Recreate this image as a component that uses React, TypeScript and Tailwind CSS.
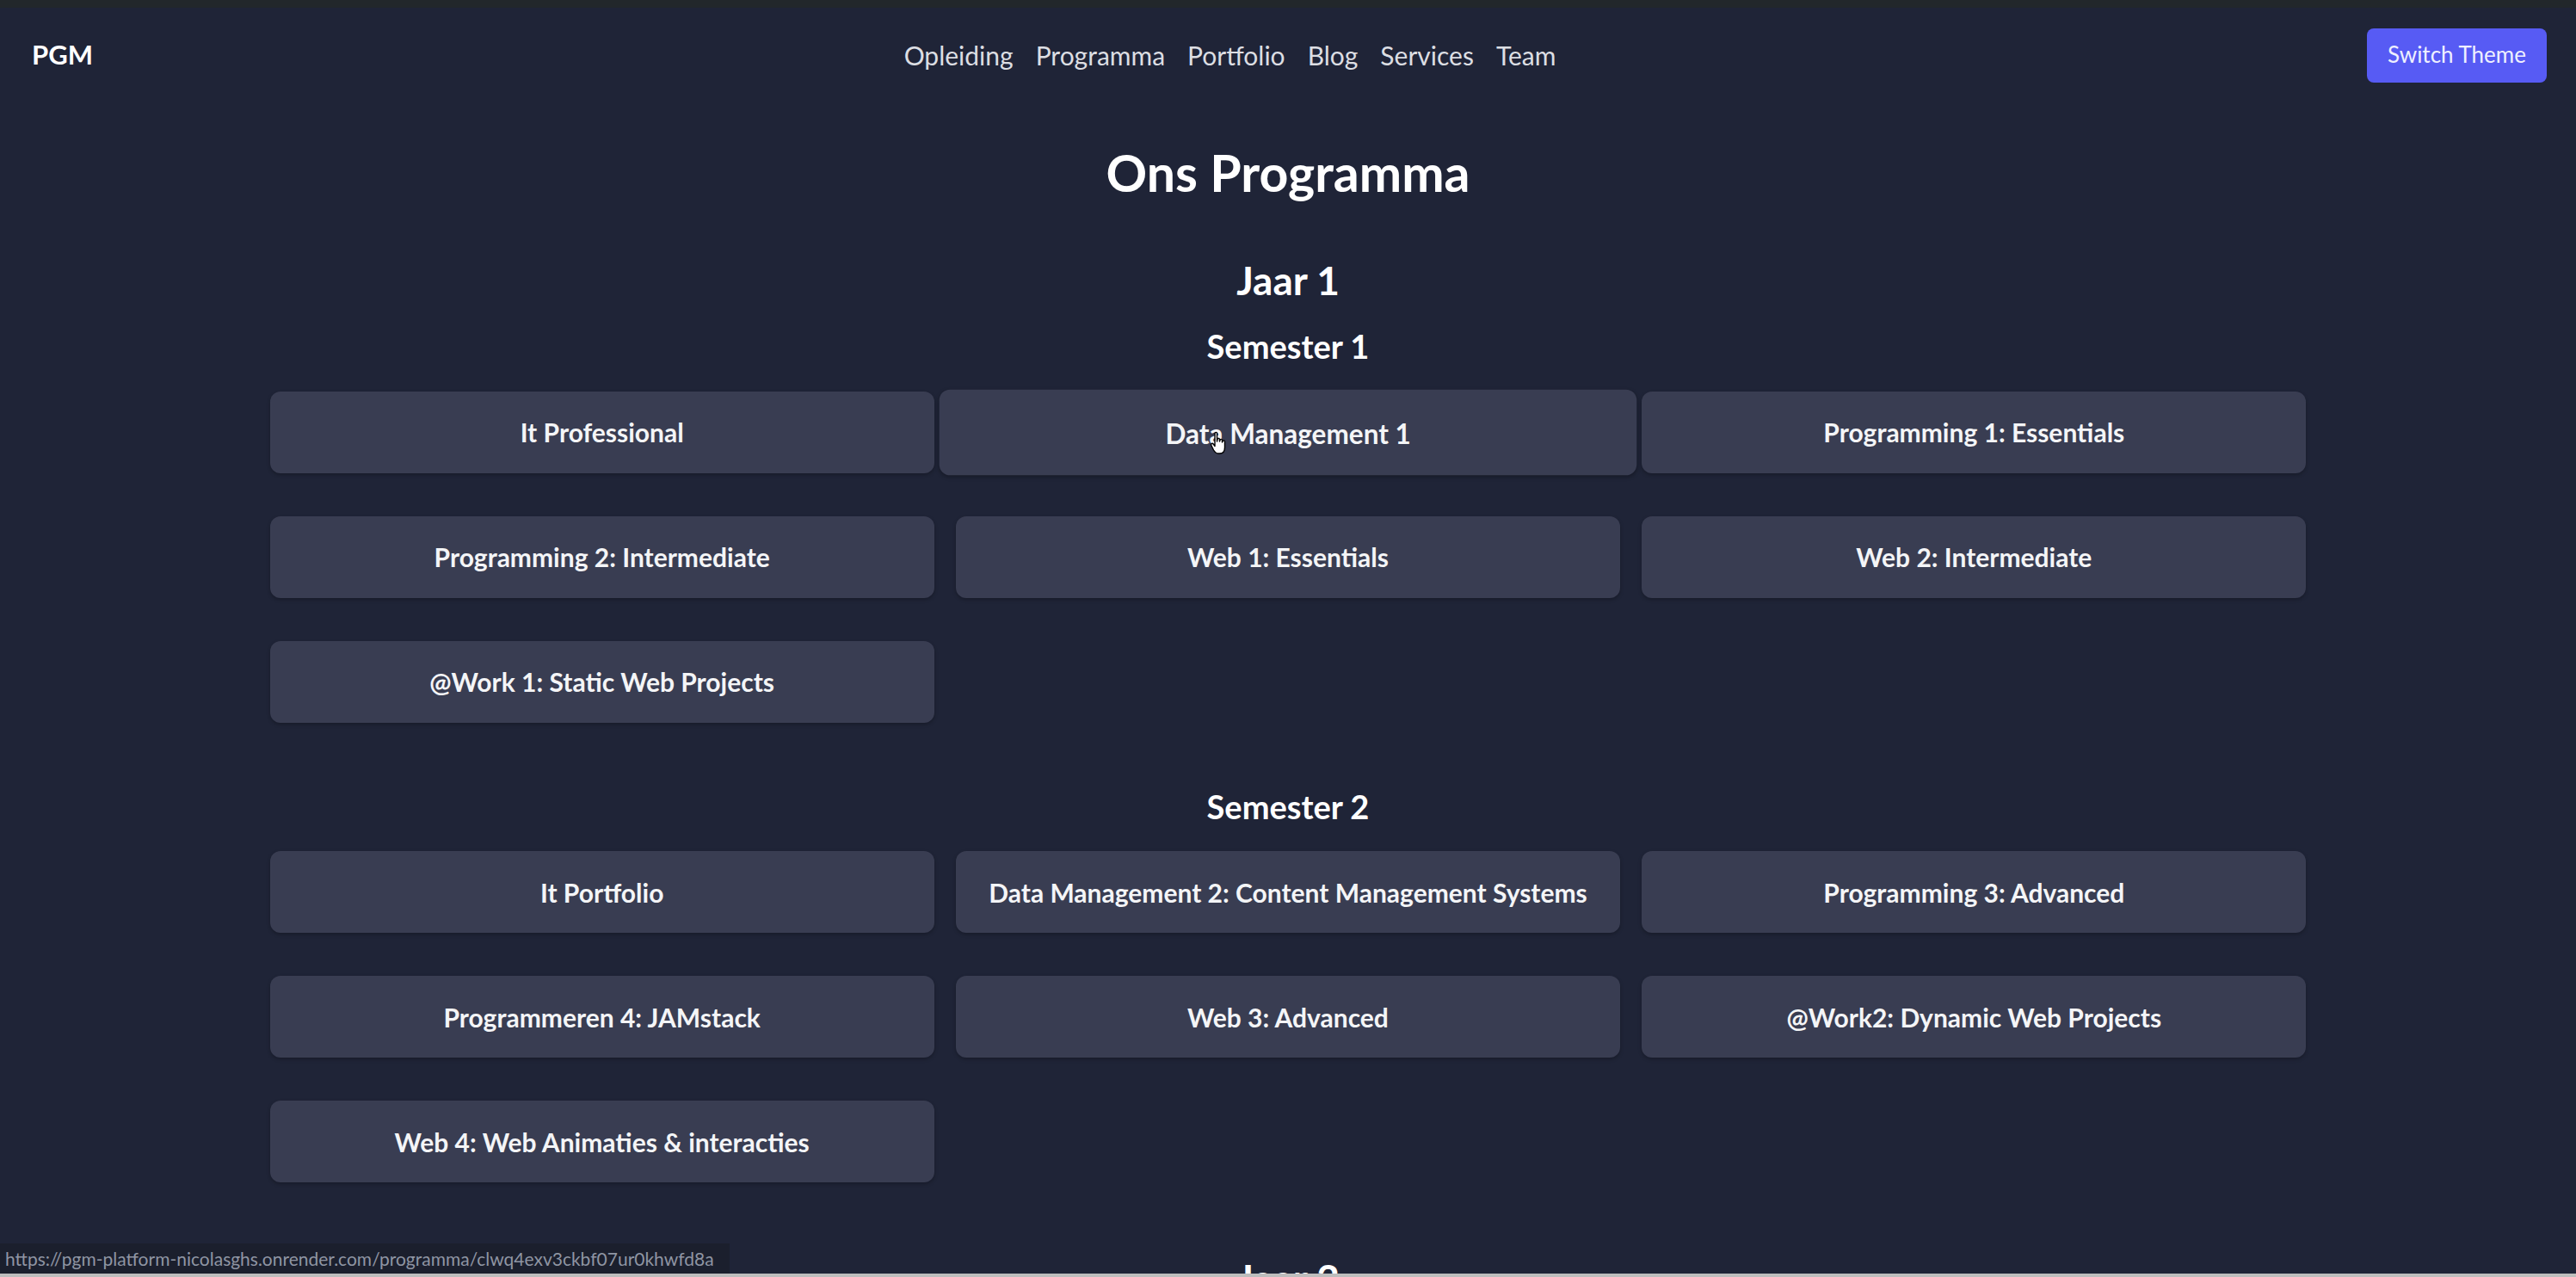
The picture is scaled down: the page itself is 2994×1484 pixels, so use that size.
import React from "react";

const sem1 = [
  "It Professional",
  "Data Management 1",
  "Programming 1: Essentials",
  "Programming 2: Intermediate",
  "Web 1: Essentials",
  "Web 2: Intermediate",
  "@Work 1: Static Web Projects",
];

const sem2 = [
  "It Portfolio",
  "Data Management 2: Content Management Systems",
  "Programming 3: Advanced",
  "Programmeren 4: JAMstack",
  "Web 3: Advanced",
  "@Work2: Dynamic Web Projects",
  "Web 4: Web Animaties & interacties",
];

function HandCursor() {
  return (
    <svg
      className="absolute left-[1406px] top-[500px] pointer-events-none"
      width="22"
      height="30"
      viewBox="0 0 22 30"
    >
      <path
        d="M6 3.5 C6 2 8.5 2 8.5 3.5 L8.5 13 L9 10.5 C9 9 11.5 9 11.5 10.5 L11.5 13 L12 11.5 C12 10 14.5 10 14.5 11.5 L14.5 14 L15 13 C15 11.5 17.5 11.5 17.5 13 L17.5 20 C17.5 24 15.5 27 11.5 27 L10 27 C7.5 27 6 25.5 4.5 23 L1.8 17.5 C1 16 3 14.5 4.2 16 L6 18.5 Z"
        fill="#ffffff"
        stroke="#000000"
        strokeWidth="1.4"
        strokeLinejoin="round"
      />
    </svg>
  );
}

function Card({ title, hovered }: { title: string; hovered?: boolean }) {
  return (
    <div
      className={
        "h-[95px] rounded-[12px] bg-[#393d52] flex items-center justify-center shadow-[0_2px_4px_rgba(0,0,0,0.25)] " +
        (hovered ? "scale-[1.05]" : "")
      }
    >
      <span className="text-[30px] leading-[1.2] font-bold text-[#f4f5f7]">{title}</span>
    </div>
  );
}

function Grid({ items, hoverIndex }: { items: string[]; hoverIndex?: number }) {
  return (
    <div className="w-[2367px] mx-auto grid grid-cols-3 gap-x-[25px] gap-y-[50px]">
      {items.map((t, i) => (
        <Card key={t} title={t} hovered={i === hoverIndex} />
      ))}
    </div>
  );
}

export default function App() {
  return (
    <div
      className="relative h-[1484px] w-full overflow-hidden bg-[#1f2437] text-white"
      style={{ fontFamily: "Lato, 'Noto Sans', sans-serif" }}
    >
      <div className="h-[9px] bg-[#22272b]" />
      <header className="h-[110px] px-[37px] pr-[34px] flex items-center justify-between">
        <div className="text-[31px] leading-[1.2] font-bold text-white">PGM</div>
        <nav className="flex items-center gap-[26px] text-[30px] leading-[1.2] text-[#dcdee3]">
          <a>Opleiding</a>
          <a>Programma</a>
          <a>Portfolio</a>
          <a>Blog</a>
          <a>Services</a>
          <a>Team</a>
        </nav>
        <button className="w-[209px] h-[63px] rounded-[8px] bg-[#575bf4] text-[26px] leading-[1.2] text-[#eef0ff]">
          Switch Theme
        </button>
      </header>

      <main>
        <h1 className="mt-[47px] text-center text-[59px] leading-[1.2] font-bold">Ons Programma</h1>

        <section className="mt-[61px]">
          <h2 className="text-center text-[46px] leading-[1.2] font-bold">Jaar 1</h2>
          <h3 className="mt-[27px] mb-[29px] text-center text-[38px] leading-[1.2] font-bold">Semester 1</h3>
          <Grid items={sem1} hoverIndex={1} />
          <h3 className="mt-[75px] mb-[29px] text-center text-[38px] leading-[1.2] font-bold">Semester 2</h3>
          <Grid items={sem2} />
        </section>

        <section className="mt-[84px]">
          <h2 className="text-center text-[46px] leading-[1.2] font-bold">Jaar 2</h2>
        </section>
      </main>

      <HandCursor />

      <div className="absolute left-0 bottom-[4px] h-[35px] w-[848px] bg-[#1b1f2d] flex items-center px-[6px]">
        <span className="text-[21px] leading-none text-[#8f95a3] whitespace-nowrap">
          https://pgm-platform-nicolasghs.onrender.com/programma/clwq4exv3ckbf07ur0khwfd8a
        </span>
      </div>
      <div className="absolute left-0 right-0 bottom-0 h-[4px] bg-[#bdbdbd]" />
    </div>
  );
}
